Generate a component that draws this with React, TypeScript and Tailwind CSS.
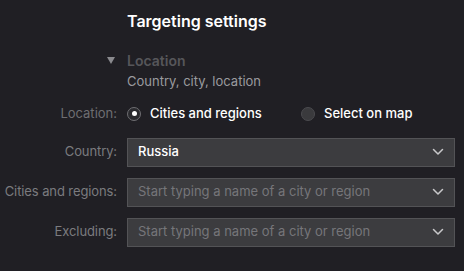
import React, { useState } from 'react';

const FONT = { fontFamily: 'Inter, "Noto Sans", "Liberation Sans", sans-serif' };

function Chevron() {
	return (
		<svg width="12" height="8" viewBox="0 0 12 8" fill="none" className="shrink-0">
			<path d="M1.5 1.5 L6 6 L10.5 1.5" stroke="#c8c8ca" strokeWidth="1.5" strokeLinecap="round" strokeLinejoin="round" />
		</svg>
	);
}

function Field({ label, value, placeholder }: { label: string; value?: string; placeholder?: string }) {
	return (
		<div className="flex items-center">
			<div className="w-[117px] shrink-0 whitespace-nowrap text-right text-[13px] tracking-[-0.1px] text-[#7b7b7f]">{label}</div>
			<div className="ml-[10px] flex h-[29px] w-[328px] items-center justify-between border border-[#535356] bg-[#3c3c3f] pl-[10px] pr-[10px]">
				{value ? (
					<span className="text-[13px] font-medium text-white">{value}</span>
				) : (
					<span className="text-[13px] text-[#76767a]">{placeholder}</span>
				)}
				<Chevron />
			</div>
		</div>
	);
}

function Radio({ checked, label, onClick }: { checked: boolean; label: string; onClick: () => void }) {
	return (
		<button type="button" onClick={onClick} className="flex items-center gap-[9px]">
			{checked ? (
				<span className="flex h-[14px] w-[14px] items-center justify-center rounded-full border border-[#6e6e72] bg-[#2a2a2e]">
					<span className="h-[5px] w-[5px] rounded-full bg-white" />
				</span>
			) : (
				<span className="h-[14px] w-[14px] rounded-full border border-[#4b4b4f] bg-[#3a3a3d]" />
			)}
			<span className="text-[13px] font-medium text-white">{label}</span>
		</button>
	);
}

export default function App() {
	const [mode, setMode] = useState<'cities' | 'map'>('cities');

	return (
		<div className="h-[271px] w-[464px] overflow-hidden bg-[#201f24]" style={FONT}>
			<div className="pl-[127px] pt-[10px]">
				<h1 className="text-[16px] font-semibold leading-[22px] text-white">Targeting settings</h1>
			</div>

			<div className="mt-[20px] flex items-start">
				<div className="flex w-[127px] justify-end pr-[12px] pt-[5px]">
					<svg width="8" height="7" viewBox="0 0 8 7">
						<path d="M0 0 H8 L4 7 Z" fill="#8a8a8e" />
					</svg>
				</div>
				<div>
					<div className="text-[14px] font-semibold leading-[18px] text-[#56565a]">Location</div>
					<div className="mt-[3px] text-[13px] leading-[16px] text-[#9b9b9f]">Country, city, location</div>
				</div>
			</div>

			<div className="mt-[15px] flex items-center">
				<div className="w-[117px] shrink-0 text-right text-[13px] text-[#6e6e72]">Location:</div>
				<div className="ml-[10px] flex items-center">
					<div className="w-[174px]">
						<Radio checked={mode === 'cities'} label="Cities and regions" onClick={() => setMode('cities')} />
					</div>
					<Radio checked={mode === 'map'} label="Select on map" onClick={() => setMode('map')} />
				</div>
			</div>

			<div className="mt-[14px] flex flex-col gap-[11px]">
				<Field label="Country:" value="Russia" />
				<Field label="Cities and regions:" placeholder="Start typing a name of a city or region" />
				<Field label="Excluding:" placeholder="Start typing a name of a city or region" />
			</div>
		</div>
	);
}
